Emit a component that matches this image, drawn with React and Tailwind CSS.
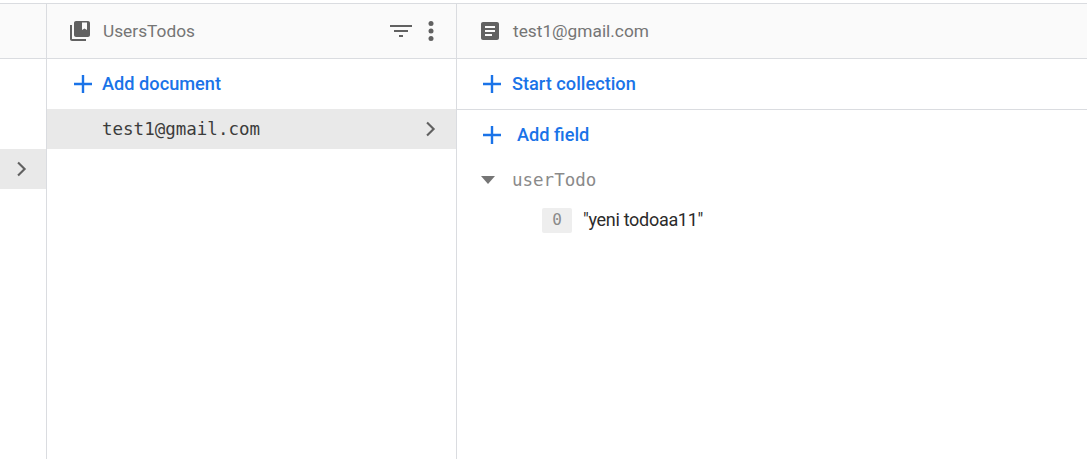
import React from 'react';

const roboto = 'font-["Roboto",sans-serif]';
const mono = 'font-["DejaVu_Sans_Mono",monospace]';

const Plus = () => (
  <svg width="24" height="24" viewBox="0 0 24 24" fill="#1a73e8" className="shrink-0">
    <path d="M21 13.200h-7.800V21h-2.400v-7.800H3v-2.400h7.800V3h2.400v7.800H21z" />
  </svg>
);

const Chevron = () => (
  <svg width="24" height="24" viewBox="0 0 24 24" fill="#616161" className="shrink-0">
    <path d="M8.800 4.700 7.300 6.200 13.100 12l-5.800 5.800 1.500 1.500L16.100 12z" />
  </svg>
);

const CollectionIcon = () => (
  <svg width="24" height="24" viewBox="0 0 24 24" fill="#616161" className="shrink-0">
    <path d="M4 6H2v14c0 1.100.9 2 2 2h14v-2H4V6z" />
    <path d="M20 2H8c-1.100 0-2 .9-2 2v12c0 1.100.9 2 2 2h12c1.100 0 2-.9 2-2V4c0-1.100-.9-2-2-2zm-1 9-2.500-1.500L14 11V3.500h5V11z" />
  </svg>
);

const DocIcon = () => (
  <svg width="24" height="24" viewBox="0 0 24 24" fill="#616161" className="shrink-0">
    <path d="M19 3H5c-1.100 0-2 .9-2 2v14c0 1.100.9 2 2 2h14c1.100 0 2-.9 2-2V5c0-1.100-.9-2-2-2zm-5 14H7v-2h7v2zm3-4H7v-2h10v2zm0-4H7V7h10v2z" />
  </svg>
);

const FilterIcon = () => (
  <svg width="24" height="24" viewBox="0 0 24 24" fill="#616161" className="shrink-0">
    <path d="M10 18h4v-2h-4v2zM1 6v2h22V6H1zm4 7h14v-2H5v2z" />
  </svg>
);

const MoreIcon = () => (
  <svg width="24" height="24" viewBox="0 0 24 24" fill="#616161" className="shrink-0">
    <circle cx="12" cy="4.500" r="2.500" />
    <circle cx="12" cy="12" r="2.500" />
    <circle cx="12" cy="19.500" r="2.500" />
  </svg>
);

// linha azul com o "+" (Add document, Start collection, Add field)
const AddRow = ({ label, gap, border, pad }) => (
  <div className={`flex items-center ${pad} ${border ? 'h-[51px] border-b border-[#dadce0]' : 'h-[50px]'}`}>
    <Plus />
    <span className={`${gap} ${roboto} text-[18.200px] font-medium text-[#1a73e8]`}>{label}</span>
  </div>
);

export default function App() {
  return (
    <div className={`h-[459px] w-[1087px] overflow-hidden bg-white pt-[3px] ${roboto}`}>
      <div className="flex h-[456px] border-t border-[#dadce0]">
        {/* coluna da esquerda */}
        <div className="flex w-[47px] shrink-0 flex-col border-r border-[#dadce0]">
          <div className="h-[55px] border-b border-[#dadce0] bg-[#fafafa]" />
          <div className="mt-[90px] flex h-[40px] items-center justify-center bg-[#e9e9e9] pr-[3px]">
            <Chevron />
          </div>
        </div>

        {/* coleção */}
        <div className="flex w-[410px] shrink-0 flex-col border-r border-[#dadce0]">
          <div className="flex h-[55px] items-center border-b border-[#dadce0] bg-[#fafafa] pl-[21px] pr-[13px]">
            <CollectionIcon />
            <span className="ml-[11px] pt-[2px] text-[17.300px] text-[#757575]">UsersTodos</span>
            <div className="ml-auto flex items-center gap-[6px]">
              <FilterIcon />
              <MoreIcon />
            </div>
          </div>
          <AddRow label="Add document" gap="ml-[7px]" pad="pl-[24px]" />
          <div className="flex h-[40px] items-center justify-between bg-[#e9e9e9] pl-[55px] pr-[13px]">
            <span className={`${mono} text-[17.500px] text-[#3c3c3c]`}>test1@gmail.com</span>
            <Chevron />
          </div>
        </div>

        {/* documento */}
        <div className="flex min-w-0 flex-1 flex-col">
          <div className="flex h-[55px] items-center border-b border-[#dadce0] bg-[#fafafa] pl-[21px]">
            <DocIcon />
            <span className="ml-[11px] pt-[2px] text-[17.300px] text-[#757575]">test1@gmail.com</span>
          </div>
          <AddRow label="Start collection" gap="ml-[8px]" pad="pl-[23px]" border />
          <AddRow label="Add field" gap="ml-[13px]" pad="pl-[23px]" />
          <div className="flex h-[40px] items-center pl-[24px]">
            <svg width="14" height="8" viewBox="0 0 14 8" fill="#757575" className="shrink-0">
              <path d="M0 0h14L7 8z" />
            </svg>
            <span className={`ml-[17px] ${mono} text-[17.500px] text-[#8a8a8a]`}>userTodo</span>
          </div>
          <div className="flex h-[40px] items-center pl-[85px]">
            <span className={`flex h-[25px] w-[30px] items-center justify-center rounded-[2px] bg-[#eeeeee] ${mono} text-[16px] text-[#8a8a8a]`}>0</span>
            <span className="ml-[11px] pb-[1px] text-[18px] tracking-[-0.300px] text-[#2b2b2b]">"yeni todoaa11"</span>
          </div>
        </div>
      </div>
    </div>
  );
}
